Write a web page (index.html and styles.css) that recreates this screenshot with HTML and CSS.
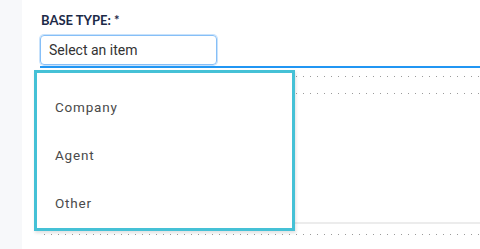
FILE: index.html
```html
<!DOCTYPE html>
<html>
<head>
<meta charset="utf-8">
<link rel="stylesheet" href="styles.css">
</head>
<body>
<div class="page">
  <aside class="sidebar"></aside>
  <main class="main">
    <div class="field">
      <label class="label">BASE TYPE: *</label>
      <div class="input">Select an item</div>
    </div>
    <div class="underline"></div>
    <div class="rows">
      <div class="dots dots-a"></div>
      <div class="dots dots-b"></div>
      <div class="spacer"></div>
      <div class="solid"></div>
      <div class="dots dots-c"></div>
    </div>
    <ul class="dropdown">
      <li class="option">Company</li>
      <li class="option">Agent</li>
      <li class="option">Other</li>
    </ul>
  </main>
</div>
</body>
</html>
```
FILE: styles.css
```css
html, body {
  margin: 0;
  padding: 0;
  background: #ffffff;
  width: 480px;
  height: 249px;
  overflow: hidden;
}
.page {
  display: flex;
  height: 249px;
}
.sidebar {
  width: 22px;
  flex: none;
  background: #f7f8fa;
}
.main {
  flex: 1;
  position: relative;
  padding-top: 12px;
  padding-left: 18px;
}
.field {
  display: flex;
  flex-direction: column;
}
.label {
  font-family: Lato, "Noto Sans", sans-serif;
  font-weight: 700;
  font-size: 13px;
  line-height: 16px;
  color: #1d2a48;
  margin-left: 1px;
  margin-bottom: 7px;
}
.input {
  box-sizing: border-box;
  width: 177px;
  height: 30px;
  border: 1px solid #86bff7;
  box-shadow: 0 0 0 1px rgba(134, 191, 247, 0.45);
  border-radius: 4px;
  padding-left: 8px;
  display: flex;
  align-items: center;
  font-family: Roboto, "Liberation Sans", sans-serif;
  font-size: 14px;
  color: #333333;
}
.underline {
  height: 2px;
  background: #2196f3;
  margin-top: 1px;
}
.rows {
  margin-left: 4px;
  display: flex;
  flex-direction: column;
}
.dots {
  height: 1px;
  background-image: linear-gradient(to right, #9a9a9a 1px, transparent 1px);
  background-size: 7px 1px;
  background-repeat: repeat-x;
}
.dots-a { margin-top: 8px; }
.dots-b { margin-top: 16px; }
.spacer { height: 128px; }
.solid {
  height: 2px;
  background: #ececec;
}
.dots-c { margin-top: 10px; }
.dropdown {
  position: absolute;
  left: 12px;
  top: 70px;
  width: 255px;
  height: 145px;
  margin: 0;
  padding: 10px 0 0 0;
  box-sizing: content-box;
  list-style: none;
  background: #ffffff;
  border: 3px solid #45c1d6;
  box-shadow: 1px 2px 3px rgba(0, 0, 0, 0.12);
}
.option {
  height: 48px;
  display: flex;
  align-items: center;
  padding-left: 18px;
  font-family: Roboto, "Liberation Sans", sans-serif;
  font-size: 13.5px;
  letter-spacing: 0.8px;
  color: #4a4a4a;
}
```
